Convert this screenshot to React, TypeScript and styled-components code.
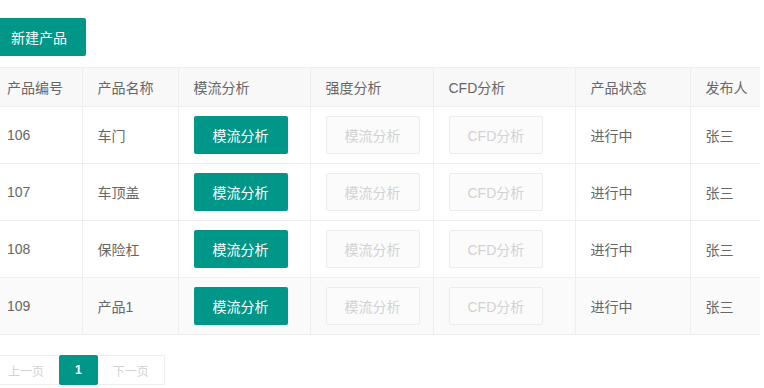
import styled, { createGlobalStyle } from "styled-components";

const GlobalStyle = createGlobalStyle`
  html, body {
    margin: 0;
    padding: 0;
    background: #fff;
  }
  body {
    font-family: "Liberation Sans", "Noto Sans CJK SC", sans-serif;
    color: #666;
    font-size: 14px;
    overflow: hidden;
  }
`;

type Product = {
  id: number;
  name: string;
  status: string;
  author: string;
};

const products: Product[] = [
  { id: 106, name: "车门", status: "进行中", author: "张三" },
  { id: 107, name: "车顶盖", status: "进行中", author: "张三" },
  { id: 108, name: "保险杠", status: "进行中", author: "张三" },
  { id: 109, name: "产品1", status: "进行中", author: "张三" },
];

const columns = [
  { title: "产品编号", width: 90 },
  { title: "产品名称", width: 96 },
  { title: "模流分析", width: 132 },
  { title: "强度分析", width: 123 },
  { title: "CFD分析", width: 142 },
  { title: "产品状态", width: 115 },
  { title: "发布人", width: 120 },
];

export default function App() {
  return (
    <>
      <GlobalStyle />
      <Page>
        <Toolbar>
          <PrimaryButton>新建产品</PrimaryButton>
        </Toolbar>
        <TableClip>
          <Table>
            <colgroup>
              {columns.map((c) => (
                <col key={c.title} style={{ width: c.width }} />
              ))}
            </colgroup>
            <thead>
              <tr>
                {columns.map((c) => (
                  <Th key={c.title}>{c.title}</Th>
                ))}
              </tr>
            </thead>
            <tbody>
              {products.map((p, i) => (
                <Row key={p.id} $hover={i === products.length - 1}>
                  <Td>{p.id}</Td>
                  <Td>{p.name}</Td>
                  <Td>
                    <CellButton>模流分析</CellButton>
                  </Td>
                  <Td>
                    <DisabledButton>模流分析</DisabledButton>
                  </Td>
                  <Td>
                    <DisabledButton>CFD分析</DisabledButton>
                  </Td>
                  <Td>{p.status}</Td>
                  <Td>{p.author}</Td>
                </Row>
              ))}
            </tbody>
          </Table>
        </TableClip>
        <Pager>
          <PageItem $disabled>上一页</PageItem>
          <PageItem $current>1</PageItem>
          <PageItem $disabled>下一页</PageItem>
        </Pager>
      </Page>
    </>
  );
}

const Page = styled.div`
  margin-left: -8px;
  padding-top: 18px;
  width: 768px;
`;

const Toolbar = styled.div`
  display: flex;
`;

const PrimaryButton = styled.button`
  height: 38px;
  padding: 0 19px;
  border: none;
  border-radius: 2px;
  background: #009688;
  color: #fff;
  font-family: inherit;
  font-size: 14px;
  cursor: pointer;
`;

const TableClip = styled.div`
  margin-top: 11px;
  overflow: hidden;
`;

const Table = styled.table`
  border-collapse: collapse;
  table-layout: fixed;
  width: 818px;
  border-top: 1px solid #eee;
  border-bottom: 1px solid #eee;
`;

const Th = styled.th`
  height: 38px;
  padding: 0 15px;
  background: #f8f8f8;
  border-right: 1px solid #eee;
  border-bottom: 1px solid #eee;
  font-weight: 400;
  text-align: left;
  color: #666;
  white-space: nowrap;
`;

const Row = styled.tr<{ $hover?: boolean }>`
  background: ${(p) => (p.$hover ? "#fafafa" : "#fff")};
  & + & {
    border-top: 1px solid #eee;
  }
`;

const Td = styled.td`
  height: 56px;
  padding: 0 15px;
  border-right: 1px solid #eee;
  color: #666;
  white-space: nowrap;
`;

const CellButton = styled(PrimaryButton)`
  display: block;
`;

const DisabledButton = styled.button`
  display: block;
  height: 38px;
  padding: 0 18px;
  border: 1px solid #ececec;
  border-radius: 2px;
  background: #fbfbfb;
  color: #d2d2d2;
  font-family: inherit;
  font-size: 14px;
  cursor: not-allowed;
`;

const Pager = styled.div`
  display: flex;
  margin-top: 20px;
`;

const PageItem = styled.span<{ $current?: boolean; $disabled?: boolean }>`
  display: inline-flex;
  align-items: center;
  height: 28px;
  padding: 0 15px;
  margin-left: -1px;
  font-size: 12px;
  border: 1px solid ${(p) => (p.$current ? "#009688" : "#eee")};
  border-radius: ${(p) => (p.$current ? "2px" : "0")};
  background: ${(p) => (p.$current ? "#009688" : "#fff")};
  color: ${(p) => (p.$current ? "#fff" : p.$disabled ? "#d2d2d2" : "#333")};
  font-weight: ${(p) => (p.$current ? 700 : 400)};
  position: relative;
  z-index: ${(p) => (p.$current ? 1 : 0)};
  &:first-child {
    margin-left: 0;
  }
`;
